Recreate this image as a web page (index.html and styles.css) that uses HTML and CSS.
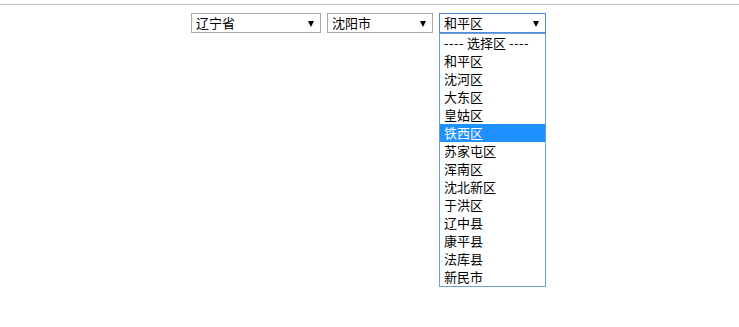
FILE: index.html
```html
<!DOCTYPE html>
<html lang="zh-CN">
<head>
  <meta charset="UTF-8" />
  <title>省市区三级联动</title>
  <link rel="stylesheet" href="styles.css">
</head>
<body>
  <div class="rule"></div>

  <div class="selects">
    <div class="select province">
      <span>辽宁省</span>
      <span class="arrow"></span>
    </div>
    <div class="select city">
      <span>沈阳市</span>
      <span class="arrow"></span>
    </div>
    <div class="picker">
      <div class="select district open">
        <span>和平区</span>
        <span class="arrow"></span>
      </div>
      <div class="dropdown">
        <div class="option"><span class="dash">----</span> 选择区 <span class="dash">----</span></div>
        <div class="option">和平区</div>
        <div class="option">沈河区</div>
        <div class="option">大东区</div>
        <div class="option">皇姑区</div>
        <div class="option current">铁西区</div>
        <div class="option">苏家屯区</div>
        <div class="option">浑南区</div>
        <div class="option">沈北新区</div>
        <div class="option">于洪区</div>
        <div class="option">辽中县</div>
        <div class="option">康平县</div>
        <div class="option">法库县</div>
        <div class="option">新民市</div>
      </div>
    </div>
  </div>
</body>
</html>
```

FILE: styles.css
```css
* {
  margin: 0;
  padding: 0;
  box-sizing: border-box;
}

body {
  font-family: "Noto Sans CJK SC", "Liberation Sans", sans-serif;
  font-size: 13px;
  color: #000;
  background: #fff;
  padding-top: 4px;
}

.rule {
  border-top: 1px solid #c4c4c4;
}

.selects {
  display: flex;
  align-items: flex-start;
  justify-content: center;
  gap: 6px;
  margin-top: 8px;
  padding-right: 2px;
}

.picker {
  display: flex;
  flex-direction: column;
  width: 107px;
}

.select {
  height: 20px;
  border: 1px solid #a9a9a9;
  display: flex;
  align-items: center;
  justify-content: space-between;
  padding: 0 6px 0 4px;
  line-height: 18px;
  background: #fff;
}

.province { width: 130px; }
.city { width: 106px; }
.district { width: 107px; }

.select.open {
  border-color: #4c8ed9;
}

.arrow {
  width: 0;
  height: 0;
  border-left: 3.5px solid transparent;
  border-right: 3.5px solid transparent;
  border-top: 6px solid #000;
  margin-top: 1px;
}

.dropdown {
  border: 1px solid #6a9fd8;
  background: #fff;
}

.option {
  height: 18px;
  line-height: 18px;
  padding-left: 4px;
  white-space: nowrap;
}

.option .dash {
  letter-spacing: 0.5px;
}

.option.current {
  background: #1e90ff;
  color: #fff;
}
```
